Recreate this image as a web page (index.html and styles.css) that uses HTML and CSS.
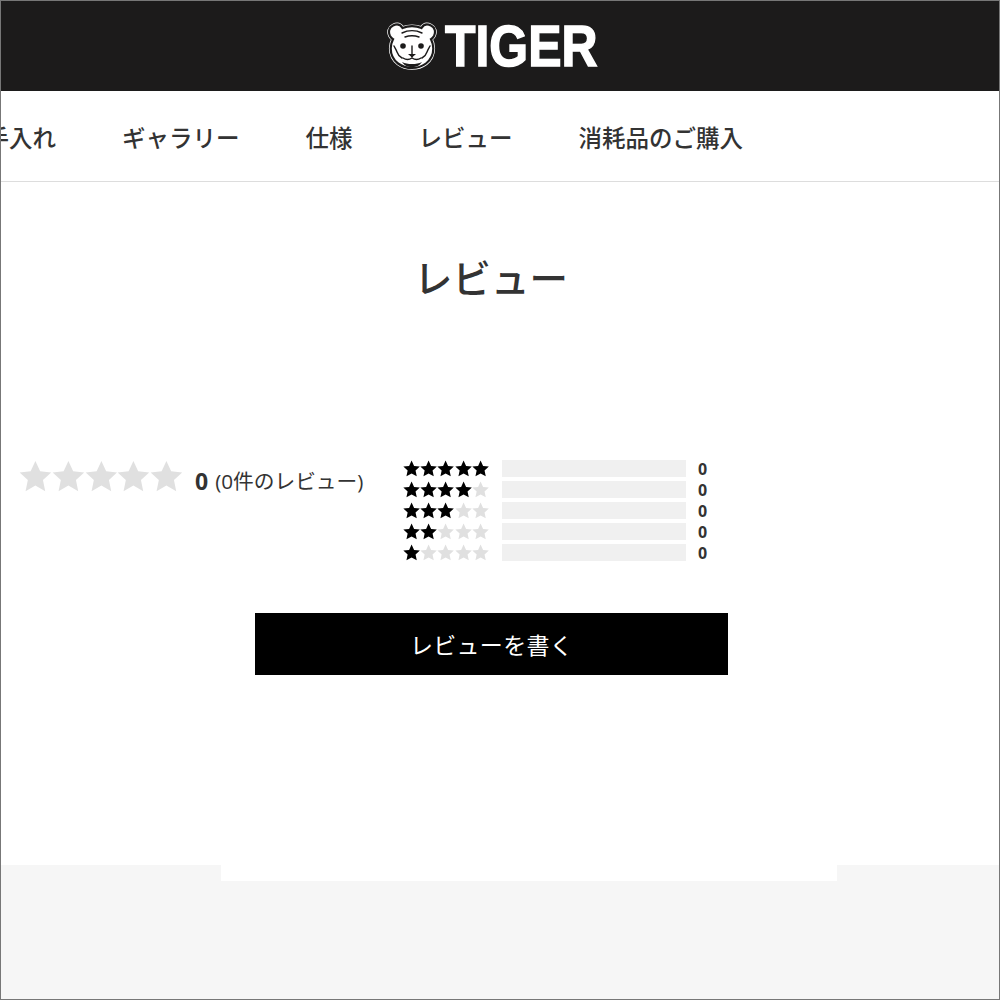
FILE: index.html
```html
<!DOCTYPE html>
<html lang="ja">
<head>
    <meta charset="UTF-8">
    <meta name="viewport" content="width=device-width, initial-scale=1.0">
    <title>レビュー</title>
    <link rel="stylesheet" href="styles.css">
</head>
<body>
    <svg class="defs" width="0" height="0">
        <defs>
            <polygon id="star" points="10,0.6 12.9,6.9 19.6,7.6 14.6,12.2 16,19 10,15.6 4,19 5.4,12.2 0.4,7.6 7.1,6.9"></polygon>
            <path id="head" d="M8 4.500c4-2 7.500-1 9.500 2.500 3-1.200 6-1.800 9.500-1.800s6.500.6 9.500 1.800c2-3.500 5.500-4.500 9.500-2.500 4 2 5 6.500 3 10.500-.8 1.500-1.800 2.500-3 3.200 1.500 2.800 2.300 5.800 2.300 9.300 0 6.500-2.800 11.500-7.300 15-4 3-8.800 4.500-14 4.500s-10-1.500-14-4.500c-4.500-3.500-7.300-8.500-7.300-15 0-3.500.8-6.500 2.300-9.300-1.200-.7-2.200-1.700-3-3.200-2-4-1-8.500 3-10.500z"></path>
        </defs>
    </svg>
    <div class="page">
        <header class="top-bar">
            <div class="logo">
                <svg class="logo-face" viewBox="0 0 54 50" width="54" height="50">
                    <use class="face-rim" href="#head"></use>
                    <use class="face-shape" href="#head"></use>
                    <path class="face-line" d="M17 12c6-3 14-3 20 0M20 16c4-1.500 10-1.500 14 0M9 25c1 2 2 3 3 6 1 3 3 5 5 6M45 25c-1 2-2 3-3 6-1 3-3 5-5 6M27 25v11M18 37c3 2 6 2 9 0 3 2 6 2 9 0"></path>
                    <circle class="face-dark" cx="18" cy="25" r="2.800"></circle>
                    <circle class="face-dark" cx="36" cy="25" r="2.800"></circle>
                    <path class="face-dark" d="M23 33h8l-4 3.500zM17 41c3 1.500 6 2 10 2s7-.5 10-2c-2 3-5 5-10 5s-8-2-10-5z"></path>
                </svg>
                <span class="logo-word"><span class="logo-text">TIGER</span></span>
            </div>
        </header>

        <nav class="tabs">
            <a href="#">お手入れ</a>
            <a href="#">ギャラリー</a>
            <a href="#">仕様</a>
            <a href="#">レビュー</a>
            <a href="#">消耗品のご購入</a>
        </nav>

        <main class="reviews">
            <h1>レビュー</h1>
            <div class="summary">
                <div class="average">
                    <div class="stars big">
                        <svg viewBox="0 0 20 20"><use href="#star"></use></svg>
                        <svg viewBox="0 0 20 20"><use href="#star"></use></svg>
                        <svg viewBox="0 0 20 20"><use href="#star"></use></svg>
                        <svg viewBox="0 0 20 20"><use href="#star"></use></svg>
                        <svg viewBox="0 0 20 20"><use href="#star"></use></svg>
                    </div>
                    <span class="score">0</span>
                    <span class="total">(0件のレビュー)</span>
                </div>
                <div class="breakdown">
                    <div class="row">
                        <div class="stars small">
                            <svg class="on" viewBox="0 0 20 20"><use href="#star"></use></svg>
                            <svg class="on" viewBox="0 0 20 20"><use href="#star"></use></svg>
                            <svg class="on" viewBox="0 0 20 20"><use href="#star"></use></svg>
                            <svg class="on" viewBox="0 0 20 20"><use href="#star"></use></svg>
                            <svg class="on" viewBox="0 0 20 20"><use href="#star"></use></svg>
                        </div>
                        <div class="bar"></div>
                        <span class="count">0</span>
                    </div>
                    <div class="row">
                        <div class="stars small">
                            <svg class="on" viewBox="0 0 20 20"><use href="#star"></use></svg>
                            <svg class="on" viewBox="0 0 20 20"><use href="#star"></use></svg>
                            <svg class="on" viewBox="0 0 20 20"><use href="#star"></use></svg>
                            <svg class="on" viewBox="0 0 20 20"><use href="#star"></use></svg>
                            <svg viewBox="0 0 20 20"><use href="#star"></use></svg>
                        </div>
                        <div class="bar"></div>
                        <span class="count">0</span>
                    </div>
                    <div class="row">
                        <div class="stars small">
                            <svg class="on" viewBox="0 0 20 20"><use href="#star"></use></svg>
                            <svg class="on" viewBox="0 0 20 20"><use href="#star"></use></svg>
                            <svg class="on" viewBox="0 0 20 20"><use href="#star"></use></svg>
                            <svg viewBox="0 0 20 20"><use href="#star"></use></svg>
                            <svg viewBox="0 0 20 20"><use href="#star"></use></svg>
                        </div>
                        <div class="bar"></div>
                        <span class="count">0</span>
                    </div>
                    <div class="row">
                        <div class="stars small">
                            <svg class="on" viewBox="0 0 20 20"><use href="#star"></use></svg>
                            <svg class="on" viewBox="0 0 20 20"><use href="#star"></use></svg>
                            <svg viewBox="0 0 20 20"><use href="#star"></use></svg>
                            <svg viewBox="0 0 20 20"><use href="#star"></use></svg>
                            <svg viewBox="0 0 20 20"><use href="#star"></use></svg>
                        </div>
                        <div class="bar"></div>
                        <span class="count">0</span>
                    </div>
                    <div class="row">
                        <div class="stars small">
                            <svg class="on" viewBox="0 0 20 20"><use href="#star"></use></svg>
                            <svg viewBox="0 0 20 20"><use href="#star"></use></svg>
                            <svg viewBox="0 0 20 20"><use href="#star"></use></svg>
                            <svg viewBox="0 0 20 20"><use href="#star"></use></svg>
                            <svg viewBox="0 0 20 20"><use href="#star"></use></svg>
                        </div>
                        <div class="bar"></div>
                        <span class="count">0</span>
                    </div>
                </div>
            </div>
            <button class="write-btn">レビューを書く</button>
        </main>

        <footer class="site-footer">
            <div class="notch"></div>
        </footer>
    </div>
</body>
</html>
```

FILE: styles.css
```css
* {
    box-sizing: border-box;
}
body {
    margin: 0;
    font-family: "Open Sans", "Noto Sans CJK JP", sans-serif;
    color: #333;
    background-color: #fff;
}
.defs {
    display: block;
    height: 0;
}
.page {
    display: flex;
    flex-direction: column;
    height: 1000px;
    border: 1px solid #777;
    overflow: hidden;
}
.top-bar {
    flex: none;
    display: flex;
    justify-content: center;
    align-items: center;
    height: 90px;
    padding-right: 19px;
    background-color: #1c1b1b;
}
.logo {
    display: flex;
    align-items: center;
    gap: 6px;
}
.logo-face {
    display: block;
}
.face-rim {
    fill: #fff;
    stroke: #fff;
    stroke-width: 3.6;
}
.face-shape {
    fill: #fff;
    stroke: #1c1b1b;
    stroke-width: 2.2;
}
.face-line {
    fill: none;
    stroke: #1c1b1b;
    stroke-width: 1.4;
    stroke-linecap: round;
}
.face-dark {
    fill: #1c1b1b;
}
.logo-word {
    display: block;
    width: 152px;
    height: 44px;
}
.logo-text {
    display: block;
    font-family: "Liberation Sans", sans-serif;
    font-weight: 700;
    font-size: 58px;
    line-height: 44px;
    color: #fff;
    -webkit-text-stroke: 1.5px #fff;
    transform: scaleX(0.86);
    transform-origin: left center;
}
.tabs {
    flex: none;
    display: flex;
    align-items: center;
    gap: 66px;
    height: 91px;
    margin-left: -39px;
    padding-top: 2px;
    border-bottom: 1px solid #ddd;
    white-space: nowrap;
}
.tabs a {
    color: #333;
    font-size: 23.500px;
    font-weight: 500;
    text-decoration: none;
}
.reviews {
    flex: 1;
    display: flex;
    flex-direction: column;
}
.reviews h1 {
    margin: 69px 0 0 413px;
    font-size: 38.500px;
    font-weight: 500;
    line-height: 54px;
    white-space: nowrap;
}
.summary {
    display: flex;
    margin: 155px 0 0 18px;
}
.average {
    display: flex;
    align-items: flex-start;
    width: 384px;
    height: 35px;
}
.stars {
    display: flex;
    flex: none;
}
.stars svg {
    display: block;
    fill: #e0e0e0;
}
.stars svg.on {
    fill: #000;
}
.big svg {
    width: 32.800px;
    height: 32.800px;
}
.small svg {
    width: 17.200px;
    height: 17.200px;
}
.score {
    margin: 6px 0 0 12px;
    font-size: 23px;
    font-weight: 700;
    line-height: 30px;
}
.total {
    margin: 6px 0 0 7px;
    font-size: 20.700px;
    line-height: 30px;
    white-space: nowrap;
}
.breakdown {
    display: flex;
    flex-direction: column;
    gap: 4px;
}
.row {
    display: flex;
    align-items: center;
    height: 17px;
}
.bar {
    width: 184px;
    height: 17px;
    margin-left: 13px;
    background-color: #f0f0f0;
}
.count {
    margin: 2px 0 0 12px;
    font-size: 16px;
    font-weight: 700;
    line-height: 17px;
}
.write-btn {
    width: 473px;
    height: 62px;
    margin: 52px 0 0 254px;
    padding: 0;
    border: none;
    background-color: #000;
    color: #fff;
    font-family: inherit;
    font-size: 23px;
    letter-spacing: 0.300px;
}
.site-footer {
    flex: none;
    height: 134px;
    background-color: #f6f6f6;
}
.notch {
    width: 616px;
    height: 16px;
    margin-left: 220px;
    background-color: #fff;
}
```
